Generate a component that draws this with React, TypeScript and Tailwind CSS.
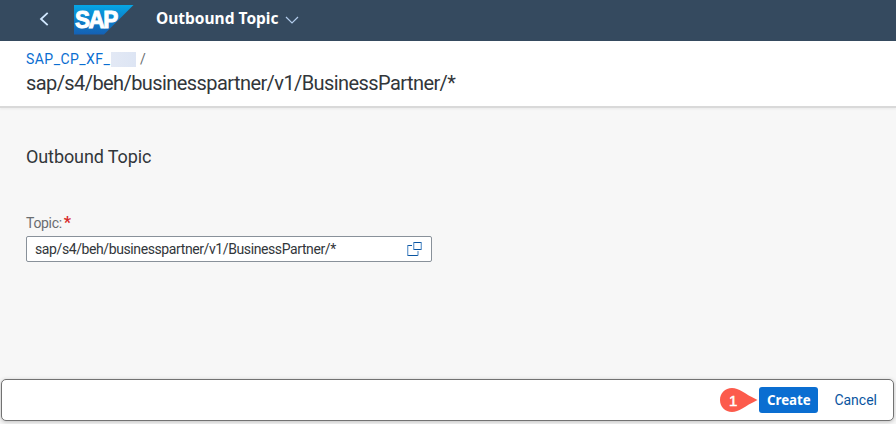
import React from "react";

function SapLogo() {
  return (
    <svg className="ml-[25px] h-[30px] w-[60px] shrink-0" viewBox="0 0 60 30">
      <defs>
        <linearGradient id="sapBlue" x1="0" y1="0" x2="0" y2="1">
          <stop offset="0" stopColor="#06a6e5" />
          <stop offset="0.5" stopColor="#0c80cb" />
          <stop offset="1" stopColor="#1560b3" />
        </linearGradient>
      </defs>
      <path d="M0 0H59.500L30 29.500H0Z" fill="url(#sapBlue)" />
      <text x="0.900" y="23" textLength="42" lengthAdjust="spacingAndGlyphs" letterSpacing="-1.500" fontFamily="Liberation Sans, sans-serif" fontWeight="700" fontSize="23.500" fill="#fff" stroke="#fff" strokeWidth="1">SAP</text>
    </svg>
  );
}

function ShellBar() {
  return (
    <header className="flex h-[41px] items-start bg-[#354a5f] pt-[5px]">
      <svg className="ml-[39px] mt-[6px] h-4 w-[10px] shrink-0" viewBox="0 0 10 16" fill="none" stroke="#d1e8ff" strokeWidth="1.8">
        <path d="M8.700 1.800L2 8L8.700 14.200" />
      </svg>
      <SapLogo />
      <h1 className="ml-[22px] mt-px w-[122px] whitespace-nowrap font-['Noto_Sans',sans-serif] text-[15.5px] font-bold leading-6 text-white">Outbound Topic</h1>
      <svg className="ml-[7px] mt-[10px] h-[10px] w-[14px]" viewBox="0 0 14 10" fill="none" stroke="#b3cdec" strokeWidth="1.200">
        <path d="M1 2L7 8L13 2" />
      </svg>
    </header>
  );
}

function PageHeader() {
  return (
    <div className="h-[65px] bg-white pl-[26px] pt-[8px] shadow-[0_2px_0_#d9d9d9,0_3px_2px_#e9e9e9]">
      <nav className="flex h-5 items-center text-[14px] leading-5">
        <a className="w-[85px] whitespace-nowrap tracking-[0.45px] text-[#0a6ed1]">SAP_CP_XF_</a>
        <span className="h-[15px] w-[25px] bg-linear-to-r from-[#e3e9f5] to-[#dde5f4]" />
        <span className="ml-[4px] text-[#6a6d70]">/</span>
      </nav>
      <h2 className="text-[20px] leading-7 tracking-[-0.58px] text-[#32363a]">sap/s4/beh/businesspartner/v1/BusinessPartner/*</h2>
    </div>
  );
}

function TopicForm() {
  return (
    <main className="flex-1 pl-[26px] pt-[39px]">
      <h3 className="text-[18px] leading-6 tracking-[-0.1px] text-[#32363a]">Outbound Topic</h3>
      <label className="mt-[44px] flex h-5 items-center text-[14px] tracking-[-0.3px] text-[#6a6d70]">
        Topic:<span className="ml-[2px] text-[16px] font-bold text-[#d72a2a]">*</span>
      </label>
      <div className="mt-[3px] flex h-[26px] w-[406px] items-center justify-between rounded-[2px] border border-[#89919a] bg-white pl-2 pr-[9px]">
        <span className="text-[14px] tracking-[-0.4px] text-[#32363a]">sap/s4/beh/businesspartner/v1/BusinessPartner/*</span>
        <svg className="h-[14px] w-[15px]" viewBox="0 0 15 14" fill="none" stroke="#0854a0">
          <path d="M6.500 0.500H14.500M6.500 7.500H14.500M5 3.500H0.500M0.500 13.500H11" />
          <path d="M6.700 0.500V7.500M14.300 0.500V7.500M0.700 3.500V13.500M11 9V13.500" stroke="#6f9fd0" strokeWidth="1.300" />
        </svg>
      </div>
    </main>
  );
}

function StepMarker() {
  return (
    <svg className="mr-px h-[26px] w-[39px]" viewBox="0 0 39 26">
      <path d="M13 1C6 1 1 6.200 1 13S6 25 13 25C20 25 25 19.500 38.500 13C25 6.500 20 1 13 1Z" fill="#fc5b4c" />
      <text x="10" y="18.500" fontFamily="Liberation Sans, sans-serif" fontSize="15" fill="#fff" stroke="#fff" strokeWidth="0.5">1</text>
    </svg>
  );
}

function FooterBar() {
  return (
    <footer className="mb-[3px] ml-px mr-[2px] flex h-[42px] items-center rounded-[5px] border border-[#727272] bg-white shadow-[0_1px_4px_#bdbdbd]">
      <div className="ml-auto mr-4 flex items-center">
        <StepMarker />
        <button className="h-[26px] w-[59px] rounded-[3px] bg-[#0a6ed1] pt-[2px] font-['Noto_Sans',sans-serif] text-[13.3px] font-bold text-white">Create</button>
        <button className="ml-4 text-[14px] text-[#0854a0]">Cancel</button>
      </div>
    </footer>
  );
}

export default function App() {
  return (
    <div className="flex h-[424px] w-[896px] flex-col overflow-hidden bg-[#f7f7f7] font-['Roboto','Noto_Sans',sans-serif]">
      <ShellBar />
      <PageHeader />
      <TopicForm />
      <FooterBar />
    </div>
  );
}
